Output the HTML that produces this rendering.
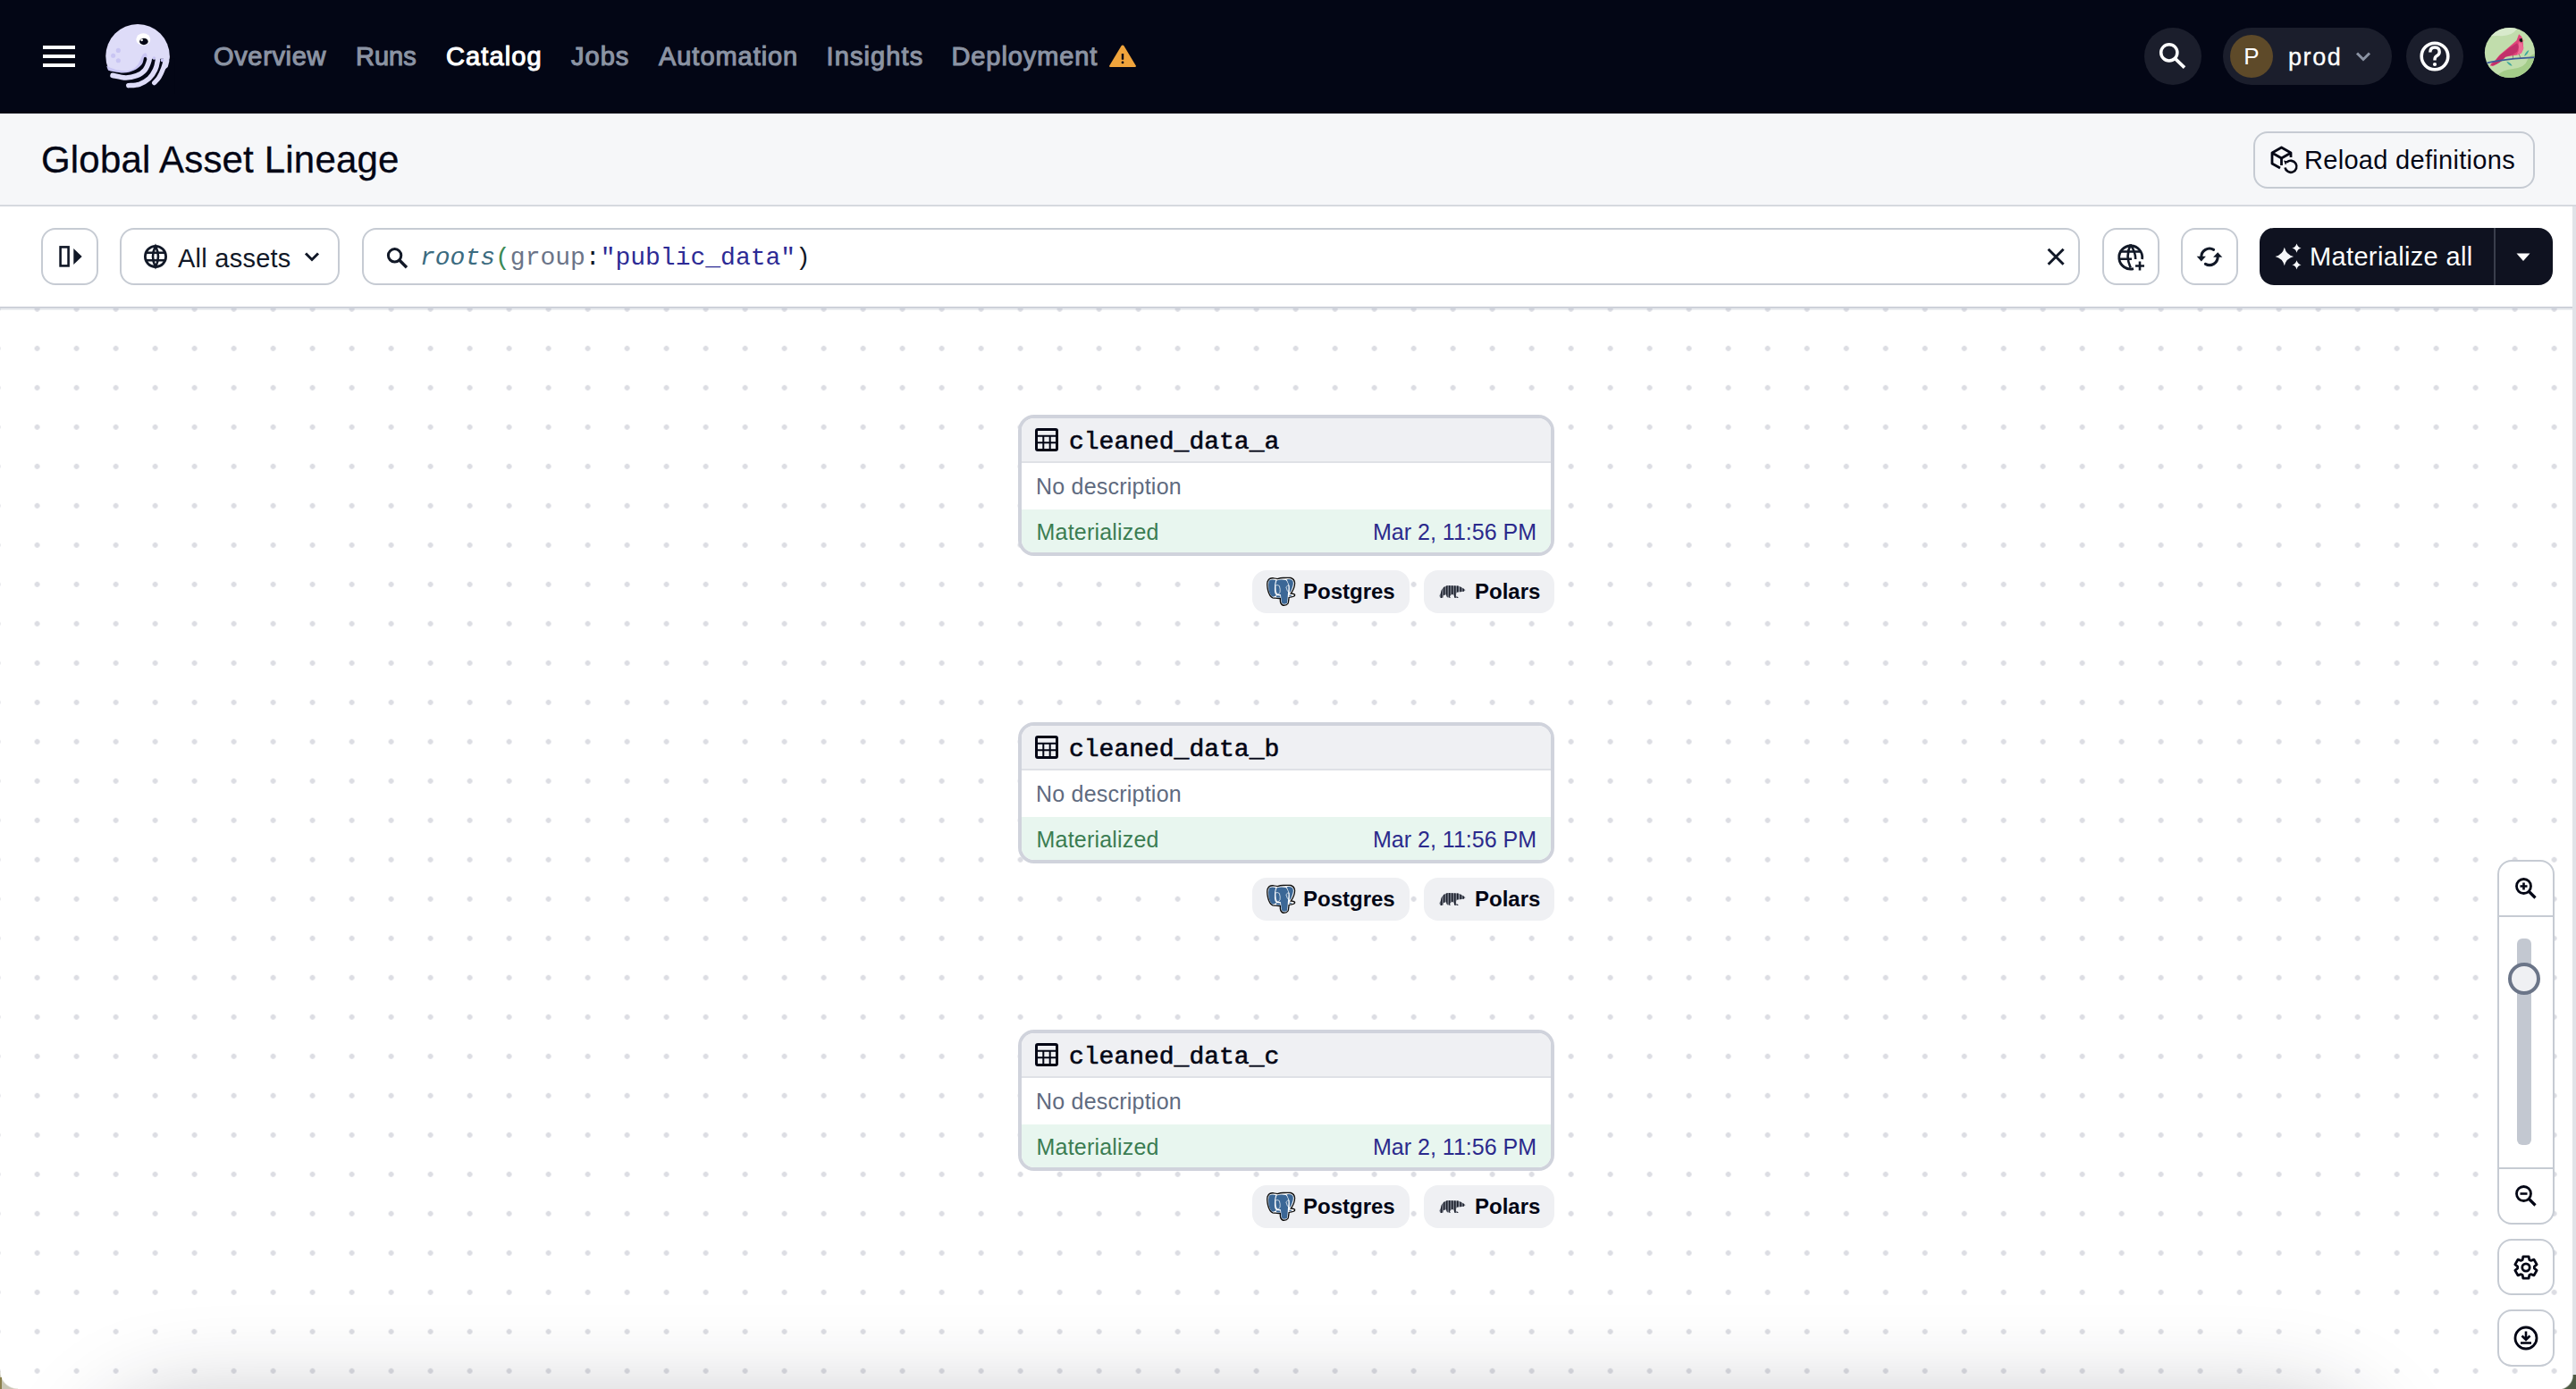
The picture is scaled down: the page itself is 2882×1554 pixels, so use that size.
<!DOCTYPE html>
<html><head><meta charset="utf-8">
<style>
*{box-sizing:border-box;margin:0;padding:0}
html,body{width:2882px;height:1554px;overflow:hidden;background:#fff;font-family:"Liberation Sans",sans-serif}
.a{position:absolute}
#nav{left:0;top:0;width:2882px;height:127px;background:#030615}
.nl{position:absolute;top:40.5px;font-size:29px;line-height:44px;letter-spacing:0.65px;color:#8b93a3;-webkit-text-stroke:1.1px #8b93a3;white-space:nowrap}
.nl.on{color:#fff;-webkit-text-stroke:1.1px #fff}
#hdr{left:0;top:127px;width:2882px;height:104px;background:#f6f7f9;border-bottom:2px solid #d6d9df}
#tb{left:0;top:231px;width:2882px;height:114px;background:#fff;border-bottom:2px solid #cdd1d9}
.btn{position:absolute;border:2px solid #c6cbd3;border-radius:16px;background:#fff}
#canvas{left:0;top:345px;width:2882px;height:1209px;background-color:#fff;
 background-image:radial-gradient(circle at center,#dcdde3 0,#dcdde3 2.6px,rgba(220,221,227,0) 3.2px);
 background-size:44px 44px;background-position:19.6px 22.8px}
.node{position:absolute;left:1139px;width:600px;height:158px;border:4px solid #d0d3dc;border-radius:18px;background:#fff;overflow:hidden}
.nh{position:absolute;left:0;top:0;width:100%;height:50px;background:#eff0f3;border-bottom:2px solid #dfe1e6}
.nname{position:absolute;left:53px;top:11px;font-family:"Liberation Mono",monospace;font-size:28px;line-height:32px;color:#030615;-webkit-text-stroke:0.6px #030615}
.ndesc{position:absolute;left:16px;top:61px;font-size:25px;letter-spacing:0.22px;line-height:30px;color:#5f6b80}
.nst{position:absolute;left:0;top:102px;width:100%;height:52px;background:#e8f6ef}
.nmat{position:absolute;left:16.5px;top:10px;font-size:25px;letter-spacing:0.2px;line-height:30px;color:#3b7d52}
.ndate{position:absolute;right:16px;top:10px;font-size:25px;line-height:30px;color:#2b2a8c}
.tag{position:absolute;height:48px;border-radius:16px;background:#eff0f3}
.tagt{position:absolute;top:11px;font-size:24px;line-height:30px;font-weight:bold;color:#030615}
</style></head><body>
<div id="nav" class="a">
 <div class="a" style="left:48px;top:51px;width:36px;height:4px;background:#fff"></div>
 <div class="a" style="left:48px;top:61px;width:36px;height:4px;background:#fff"></div>
 <div class="a" style="left:48px;top:71px;width:36px;height:4px;background:#fff"></div>
 <svg class="a" style="left:110px;top:20px" width="90" height="85" viewBox="0 0 1471 1389">
  <circle cx="720" cy="700" r="585" fill="#dedcf8"/>
  <path d="M150 880 Q330 975 520 972 Q700 955 770 770 Q800 650 860 640 Q905 650 890 745 L886 760 Q840 960 620 1000 Q400 1030 180 960Z" fill="#c9c5f3"/>
  <path d="M150 955 C200 963 367 1004 450 1005 C533 1006 593 988 650 962 C707 936 762 889 792 852 C822 815 824 760 830 742 A28 28 0 0 1 886 748 L1400 748 L1400 1389 L0 1389 L0 955Z" fill="#030615"/>
  <path d="M262 1052 C302 1059 427 1094 500 1095 C573 1096 642 1081 700 1058 C758 1035 812 1001 850 955 C888 909 915 832 930 780 C945 728 938 663 940 640" stroke="#dedcf8" stroke-width="92" fill="none" stroke-linecap="round"/>
  <path d="M552 1236 C585 1232 687 1235 750 1214 C813 1193 882 1152 930 1108 C978 1064 1014 1003 1040 948 C1066 893 1077 831 1085 780 C1093 729 1089 663 1090 640" stroke="#dedcf8" stroke-width="90" fill="none" stroke-linecap="round"/>
  <path d="M1024 1188 C1038 1171 1082 1133 1110 1088 C1138 1043 1170 973 1190 918 C1210 863 1224 806 1232 760 C1240 714 1239 660 1240 640" stroke="#dedcf8" stroke-width="86" fill="none" stroke-linecap="round"/>
  <path d="M1200 700 L1302 700 L1296 800 L1270 900 L1225 935 L1180 920Z" fill="#dedcf8"/>
  <ellipse cx="822" cy="392" rx="130" ry="112" fill="#fff"/>
  <ellipse cx="832" cy="432" rx="78" ry="62" fill="#030615"/>
  <circle cx="795" cy="405" r="22" fill="#fff"/>
  <circle cx="365" cy="595" r="42" fill="#c9c5f3"/>
  <circle cx="272" cy="690" r="42" fill="#c9c5f3"/>
  <circle cx="365" cy="780" r="42" fill="#c9c5f3"/>
  <circle cx="1020" cy="735" r="30" fill="#c9c5f3"/>
  <circle cx="1170" cy="775" r="30" fill="#c9c5f3"/>
 </svg>
 <div class="nl" style="left:239px">Overview</div>
 <div class="nl" style="left:398px;letter-spacing:0px">Runs</div>
 <div class="nl on" style="left:499px;letter-spacing:1.1px">Catalog</div>
 <div class="nl" style="left:639px;letter-spacing:1px">Jobs</div>
 <div class="nl" style="left:737px;letter-spacing:0.95px">Automation</div>
 <div class="nl" style="left:924.5px;letter-spacing:1.1px">Insights</div>
 <div class="nl" style="left:1064.5px;letter-spacing:0.9px">Deployment</div>
 <svg class="a" style="left:1240px;top:49px" width="32" height="27" viewBox="0 0 32 27">
  <path d="M16 1.5 Q17 1.5 17.6 2.5 L30.8 24.6 Q31.4 26 30 26 L2 26 Q0.6 26 1.2 24.6 L14.4 2.5 Q15 1.5 16 1.5Z" fill="#f0a43c"/>
  <rect x="14.8" y="11" width="2.4" height="6.8" rx="0.6" fill="#030615"/>
  <circle cx="16" cy="20.9" r="1.4" fill="#030615"/>
 </svg>
 <div class="a" style="left:2399px;top:31px;width:64px;height:64px;border-radius:32px;background:#1b1e2c"></div>
 <svg class="a" style="left:2399px;top:31px" width="64" height="64" viewBox="0 0 64 64">
  <circle cx="27.8" cy="27.8" r="9.1" stroke="#fff" stroke-width="3.5" fill="none"/>
  <path d="M34.6 34.6 L45 44.6" stroke="#fff" stroke-width="3.6" stroke-linecap="butt"/>
 </svg>
 <div class="a" style="left:2487px;top:31px;width:189px;height:64px;border-radius:32px;background:#1b1e2c"></div>
 <div class="a" style="left:2495px;top:39px;width:48px;height:48px;border-radius:24px;background:#5e4a29;color:#fff;font-size:26px;line-height:48px;text-align:center">P</div>
 <div class="a" style="left:2560px;top:41.8px;font-size:27px;letter-spacing:1.6px;line-height:44px;color:#fff;-webkit-text-stroke:0.3px #fff">prod</div>
 <svg class="a" style="left:2634px;top:56px" width="20" height="14" viewBox="0 0 20 14">
  <path d="M3 3.5 L10 10.5 L17 3.5" stroke="#8b93a3" stroke-width="3" fill="none"/>
 </svg>
 <div class="a" style="left:2692px;top:31px;width:64px;height:64px;border-radius:32px;background:#1b1e2c"></div>
 <svg class="a" style="left:2692px;top:31px" width="64" height="64" viewBox="0 0 64 64">
  <circle cx="32" cy="32" r="14.8" stroke="#fff" stroke-width="3.6" fill="none"/>
  <path d="M26.8 27.5 Q26.8 22 32 22 Q37.2 22 37.2 27 Q37.2 30 34.2 31.5 Q32 32.7 32 35.5 L32 36.5" stroke="#fff" stroke-width="3.4" fill="none"/>
  <circle cx="32" cy="41" r="2.1" fill="#fff"/>
 </svg>
 <svg class="a" style="left:2770px;top:20px" width="80" height="80" viewBox="0 0 1389 1389">
  <defs><clipPath id="avc"><circle cx="658" cy="677" r="487"/></clipPath></defs>
  <g clip-path="url(#avc)">
   <rect x="0" y="0" width="1389" height="1389" fill="#c1ddac"/>
   <path d="M120 420 Q260 330 480 350 Q700 360 800 210 L820 100 L100 100Z" fill="#d8eacc"/>
   <path d="M1200 690 Q1050 700 1000 820 Q960 960 720 990 Q500 1010 430 1120 L430 1300 L1200 1300Z" fill="#a4cc89"/>
   <path d="M460 720 L640 570 L790 440 L835 315 L885 360 L905 405 L915 480 L925 590 L885 680 L800 722 L660 742 L570 760 L500 835 L420 890 L340 935 L275 930 L300 880 L380 820Z" fill="#e0457a"/>
   <path d="M470 725 L650 580 L800 490 L840 560 L800 660 L700 720 L580 755 L490 845 L400 900 L320 930 L290 915 L360 850Z" fill="#c2306a"/>
   <path d="M830 470 L905 500 L925 600 L880 690 L790 725 L830 640Z" fill="#ee6b96"/>
   <path d="M895 415 L958 432 L900 455Z" fill="#f3a18e"/>
   <path d="M845 410 L895 395 L912 455 L880 475 L845 445Z" fill="#1a1a1a"/>
   <path d="M200 880 Q560 790 1160 765" stroke="#3b5a98" stroke-width="30" fill="none"/>
   <path d="M720 725 L720 790 M835 700 L865 775" stroke="#5a3040" stroke-width="9"/>
   <path d="M940 745 Q955 665 1030 625 Q1010 715 940 745Z" fill="#3ea79d"/>
   <path d="M595 845 Q675 860 705 935 Q625 915 595 845Z" fill="#3ea79d"/>
  </g>
 </svg>
</div>
<div id="hdr" class="a">
 <div class="a" style="left:46px;top:28px;font-size:42px;line-height:48px;letter-spacing:0.18px;color:#030615;-webkit-text-stroke:0.3px #030615;white-space:nowrap">Global Asset Lineage</div>
 <div class="btn" style="left:2521px;top:20px;width:315px;height:64px;background:#f6f7f9"></div>
 <svg class="a" style="left:2538px;top:34px" width="34" height="36" viewBox="0 0 34 36">
  <path d="M13 27 L4 22 L4 10 L14.5 4 L25 10 L25 15 M4 10 L14.5 16 L25 10 M14.5 16 L14.5 24" stroke="#030615" stroke-width="2.8" fill="none" stroke-linejoin="round"/>
  <path d="M20.5 20.5 A6.5 6.5 0 1 1 18.5 26.5" stroke="#030615" stroke-width="2.6" fill="none"/>
  <path d="M17 18.5 L21.5 19.5 L19 23.5Z" fill="#030615"/>
 </svg>
 <div class="a" style="left:2578px;top:30px;font-size:29px;line-height:44px;letter-spacing:0.3px;color:#030615;white-space:nowrap">Reload definitions</div>
</div>
<div id="tb" class="a">
 <div class="btn" style="left:46px;top:24px;width:64px;height:64px"></div>
 <svg class="a" style="left:46px;top:24px" width="64" height="64" viewBox="0 0 64 64">
  <rect x="21.6" y="21.4" width="9" height="21" stroke="#111827" stroke-width="2.6" fill="none"/>
  <path d="M36.3 23 L45.7 32 L36.3 41 Z" fill="#111827"/>
 </svg>
 <div class="btn" style="left:134px;top:24px;width:246px;height:64px"></div>
 <svg class="a" style="left:159px;top:41px" width="30" height="30" viewBox="0 0 30 30">
  <circle cx="15" cy="15" r="11.6" stroke="#111827" stroke-width="2.8" fill="none"/>
  <path d="M15 3.4 Q9 15 15 26.6 Q21 15 15 3.4Z" stroke="#111827" stroke-width="2.6" fill="none"/>
  <path d="M4 10.8 L26 10.8 M4 19.2 L26 19.2" stroke="#111827" stroke-width="2.6"/>
 </svg>
 <div class="a" style="left:199px;top:25.5px;font-size:29px;letter-spacing:0.25px;line-height:64px;color:#111827;white-space:nowrap">All assets</div>
 <svg class="a" style="left:338px;top:48px" width="22" height="16" viewBox="0 0 22 16">
  <path d="M4 4.5 L11 11.5 L18 4.5" stroke="#111827" stroke-width="3" fill="none"/>
 </svg>
 <div class="btn" style="left:405px;top:24px;width:1922px;height:64px"></div>
 <svg class="a" style="left:430px;top:44px" width="30" height="30" viewBox="0 0 30 30">
  <circle cx="11.6" cy="10.8" r="7.2" stroke="#111827" stroke-width="3" fill="none"/>
  <path d="M16.8 16 L25 24.2" stroke="#111827" stroke-width="3.4"/>
 </svg>
 <div class="a" style="left:470px;top:26px;font-family:'Liberation Mono',monospace;font-size:28px;line-height:64px;letter-spacing:0px;white-space:nowrap"><span style="color:#3b6b80;font-style:italic">roots</span><span style="color:#3c8a56">(</span><span style="color:#6b7488">group</span><span style="color:#111827">:</span><span style="color:#2d2b95">"public_data"</span><span style="color:#111827">)</span></div>
 <svg class="a" style="left:2286px;top:42px" width="28" height="28" viewBox="0 0 28 28">
  <path d="M5.6 5.8 L22.6 22.8 M22.6 5.8 L5.6 22.8" stroke="#111827" stroke-width="3"/>
 </svg>
 <div class="btn" style="left:2352px;top:24px;width:64px;height:64px"></div>
 <svg class="a" style="left:2352px;top:24px" width="64" height="64" viewBox="0 0 64 64">
  <path d="M35 45.6 A13 13 0 1 1 44.6 35" stroke="#111827" stroke-width="2.8" fill="none"/>
  <path d="M31.7 18.6 Q25.5 31.5 31.7 44.6 M31.7 18.6 Q37.5 28 37.2 35" stroke="#111827" stroke-width="2.6" fill="none"/>
  <path d="M19.5 26.5 L44 26.5 M19.5 34.8 L33 34.8" stroke="#111827" stroke-width="2.6"/>
  <path d="M42 37.5 L42 47.5 M37 42.5 L47 42.5" stroke="#111827" stroke-width="2.6"/>
 </svg>
 <div class="btn" style="left:2440px;top:24px;width:64px;height:64px"></div>
 
 <div class="a" style="left:2528px;top:24px;width:328px;height:64px;border-radius:16px;background:#0f1220"></div>
 <div class="a" style="left:2790px;top:24px;width:2px;height:64px;background:#3a3e4c"></div>
 <svg class="a" style="left:2440px;top:19px" width="160" height="75" viewBox="0 0 160 75">
  <path d="M22.8 37.3 A9.2 9.2 0 0 1 36.6 29.3" stroke="#111827" stroke-width="3.1" fill="none" stroke-linecap="round"/>
  <path d="M17.7 36.8 L27.9 36.8 L22.8 42.4Z" fill="#111827"/>
  <path d="M27.4 45.3 A9.2 9.2 0 0 0 41.2 37.3" stroke="#111827" stroke-width="3.1" fill="none" stroke-linecap="round"/>
  <path d="M36.1 37.8 L46.3 37.8 L41.2 32.2Z" fill="#111827"/>
  <path d="M115.8 26.7 Q117.8 35.0 126.1 37 Q117.8 39.0 115.8 47.3 Q113.8 39.0 105.5 37 Q113.8 35.0 115.8 26.7Z" fill="#f6f7f9"/>
  <path d="M129.5 22.5 Q130.5 26.6 134.6 27.6 Q130.5 28.6 129.5 32.7 Q128.5 28.6 124.4 27.6 Q128.5 26.6 129.5 22.5Z" fill="#f6f7f9"/>
  <path d="M129.5 41.199999999999996 Q130.5 45.3 134.6 46.3 Q130.5 47.3 129.5 51.4 Q128.5 47.3 124.4 46.3 Q128.5 45.3 129.5 41.199999999999996Z" fill="#f6f7f9"/>
 </svg>
 <div class="a" style="left:2584px;top:24px;font-size:29px;letter-spacing:0.35px;line-height:64px;color:#fff;white-space:nowrap">Materialize all</div>
 <svg class="a" style="left:2812px;top:50px" width="22" height="14" viewBox="0 0 22 14">
  <path d="M3.5 2.5 L18.5 2.5 L11 11Z" fill="#fff"/>
 </svg>
 <div class="a" style="left:2878px;top:0;width:4px;height:1323px;background:#e1e3e8"></div>
</div>
<div id="canvas" class="a">
</div>
<div class="a" style="left:0;top:345px;width:2878px;height:2px;background:rgba(180,186,200,0.28)"></div>
<div class="node" style="top:464px">
  <div class="nh"></div>
  <svg class="a" style="left:15px;top:11px" width="26" height="26" viewBox="0 0 26 26">
   <rect x="1.5" y="1.5" width="23" height="23" rx="1.5" stroke="#030615" stroke-width="3" fill="none"/>
   <path d="M1.5 8.7 L24.5 8.7 M1.5 16.2 L24.5 16.2 M9.3 8.7 L9.3 24.5 M16.7 8.7 L16.7 24.5" stroke="#030615" stroke-width="2"/>
  </svg>
  <div class="nname">cleaned_data_a</div>
  <div class="ndesc">No description</div>
  <div class="nst"><div class="nmat">Materialized</div><div class="ndate">Mar 2, 11:56 PM</div></div>
 </div>
 <div class="tag" style="left:1401px;top:638px;width:176px"></div>
 <svg class="a" style="left:1410px;top:640px" width="45" height="45" viewBox="0 0 1389 1389">
  <path d="M430 890 Q330 860 270 650 Q220 450 250 330 Q300 200 450 210 Q560 220 600 235 Q700 195 820 200 Q950 190 1050 200 Q1180 240 1190 380 Q1190 550 1060 740 Q1160 740 1190 780 Q1200 850 1080 860 Q1000 870 990 880 Q980 1000 960 1080 Q910 1160 790 1150 Q700 1120 690 1000 L690 910 Q600 915 520 900 Q470 900 430 890Z" fill="#fff" stroke="#0d0d0d" stroke-width="42"/>
  <path d="M300 300 Q400 230 535 288 Q485 400 492 650 Q505 780 560 800 Q480 850 430 860 Q330 800 290 600 Q262 420 300 300Z" fill="#3b6796"/>
  <path d="M565 295 Q700 240 880 280 Q990 380 970 600 Q950 760 950 820 Q945 1000 925 1075 Q880 1115 800 1105 Q735 1080 728 1000 Q718 860 708 790 Q690 760 600 770 Q540 760 525 600 Q515 420 565 295Z" fill="#3b6796"/>
  <path d="M910 255 Q1080 225 1130 320 Q1158 450 1050 680 Q1010 715 1000 700 Q1010 550 975 400 Q945 320 910 255Z" fill="#3b6796"/>
  <path d="M1000 795 Q1080 790 1110 808 Q1090 830 1000 838Z" fill="#3b6796"/>
  <path d="M560 810 Q620 800 690 820 L690 880 Q600 880 550 870Z" fill="#3b6796"/>
  <path d="M520 460 Q600 430 660 480 Q700 600 680 700 Q640 770 580 770 Q520 700 520 460Z" fill="none" stroke="#fff" stroke-width="22"/>
  <path d="M890 520 Q950 440 1000 460 Q1010 600 990 700 Q930 680 890 520Z" fill="none" stroke="#fff" stroke-width="22"/>
 </svg>
 <div class="tagt" style="left:1458px;top:647px">Postgres</div>
 <div class="tag" style="left:1593px;top:638px;width:146px"></div>
 <svg class="a" style="left:1600px;top:645px" width="50" height="35" viewBox="0 0 1984 1389">
  <defs><clipPath id="bear1"><path d="M600 480 Q700 420 780 400 L1250 420 Q1400 470 1480 540 L1580 610 L1480 660 Q1300 690 1200 690 Q1140 720 1150 860 L1270 940 L1100 950 Q1060 900 1050 820 Q1000 790 980 780 Q880 850 870 880 L920 940 L760 920 Q720 860 720 800 Q650 810 600 830 Q580 890 580 930 L470 960 Q420 900 400 850 Q470 760 480 700 Q500 620 520 580 Q560 520 600 480Z"/></clipPath></defs>
  <g clip-path="url(#bear1)">
   <rect x="380" y="380" width="1220" height="600" fill="#8d929d"/>
   <path d="M500 380 L500 980 M620 380 L620 980 M740 380 L740 980 M860 380 L860 980 M980 380 L980 980 M1100 380 L1100 980 M1220 380 L1220 980 M1360 380 L1360 980 M1480 380 L1480 980" stroke="#1b1f2b" stroke-width="70"/>
  </g>
 </svg>
 <div class="tagt" style="left:1650px;top:647px">Polars</div>
<div class="node" style="top:808px">
  <div class="nh"></div>
  <svg class="a" style="left:15px;top:11px" width="26" height="26" viewBox="0 0 26 26">
   <rect x="1.5" y="1.5" width="23" height="23" rx="1.5" stroke="#030615" stroke-width="3" fill="none"/>
   <path d="M1.5 8.7 L24.5 8.7 M1.5 16.2 L24.5 16.2 M9.3 8.7 L9.3 24.5 M16.7 8.7 L16.7 24.5" stroke="#030615" stroke-width="2"/>
  </svg>
  <div class="nname">cleaned_data_b</div>
  <div class="ndesc">No description</div>
  <div class="nst"><div class="nmat">Materialized</div><div class="ndate">Mar 2, 11:56 PM</div></div>
 </div>
 <div class="tag" style="left:1401px;top:982px;width:176px"></div>
 <svg class="a" style="left:1410px;top:984px" width="45" height="45" viewBox="0 0 1389 1389">
  <path d="M430 890 Q330 860 270 650 Q220 450 250 330 Q300 200 450 210 Q560 220 600 235 Q700 195 820 200 Q950 190 1050 200 Q1180 240 1190 380 Q1190 550 1060 740 Q1160 740 1190 780 Q1200 850 1080 860 Q1000 870 990 880 Q980 1000 960 1080 Q910 1160 790 1150 Q700 1120 690 1000 L690 910 Q600 915 520 900 Q470 900 430 890Z" fill="#fff" stroke="#0d0d0d" stroke-width="42"/>
  <path d="M300 300 Q400 230 535 288 Q485 400 492 650 Q505 780 560 800 Q480 850 430 860 Q330 800 290 600 Q262 420 300 300Z" fill="#3b6796"/>
  <path d="M565 295 Q700 240 880 280 Q990 380 970 600 Q950 760 950 820 Q945 1000 925 1075 Q880 1115 800 1105 Q735 1080 728 1000 Q718 860 708 790 Q690 760 600 770 Q540 760 525 600 Q515 420 565 295Z" fill="#3b6796"/>
  <path d="M910 255 Q1080 225 1130 320 Q1158 450 1050 680 Q1010 715 1000 700 Q1010 550 975 400 Q945 320 910 255Z" fill="#3b6796"/>
  <path d="M1000 795 Q1080 790 1110 808 Q1090 830 1000 838Z" fill="#3b6796"/>
  <path d="M560 810 Q620 800 690 820 L690 880 Q600 880 550 870Z" fill="#3b6796"/>
  <path d="M520 460 Q600 430 660 480 Q700 600 680 700 Q640 770 580 770 Q520 700 520 460Z" fill="none" stroke="#fff" stroke-width="22"/>
  <path d="M890 520 Q950 440 1000 460 Q1010 600 990 700 Q930 680 890 520Z" fill="none" stroke="#fff" stroke-width="22"/>
 </svg>
 <div class="tagt" style="left:1458px;top:991px">Postgres</div>
 <div class="tag" style="left:1593px;top:982px;width:146px"></div>
 <svg class="a" style="left:1600px;top:989px" width="50" height="35" viewBox="0 0 1984 1389">
  <defs><clipPath id="bear2"><path d="M600 480 Q700 420 780 400 L1250 420 Q1400 470 1480 540 L1580 610 L1480 660 Q1300 690 1200 690 Q1140 720 1150 860 L1270 940 L1100 950 Q1060 900 1050 820 Q1000 790 980 780 Q880 850 870 880 L920 940 L760 920 Q720 860 720 800 Q650 810 600 830 Q580 890 580 930 L470 960 Q420 900 400 850 Q470 760 480 700 Q500 620 520 580 Q560 520 600 480Z"/></clipPath></defs>
  <g clip-path="url(#bear2)">
   <rect x="380" y="380" width="1220" height="600" fill="#8d929d"/>
   <path d="M500 380 L500 980 M620 380 L620 980 M740 380 L740 980 M860 380 L860 980 M980 380 L980 980 M1100 380 L1100 980 M1220 380 L1220 980 M1360 380 L1360 980 M1480 380 L1480 980" stroke="#1b1f2b" stroke-width="70"/>
  </g>
 </svg>
 <div class="tagt" style="left:1650px;top:991px">Polars</div>
<div class="node" style="top:1152px">
  <div class="nh"></div>
  <svg class="a" style="left:15px;top:11px" width="26" height="26" viewBox="0 0 26 26">
   <rect x="1.5" y="1.5" width="23" height="23" rx="1.5" stroke="#030615" stroke-width="3" fill="none"/>
   <path d="M1.5 8.7 L24.5 8.7 M1.5 16.2 L24.5 16.2 M9.3 8.7 L9.3 24.5 M16.7 8.7 L16.7 24.5" stroke="#030615" stroke-width="2"/>
  </svg>
  <div class="nname">cleaned_data_c</div>
  <div class="ndesc">No description</div>
  <div class="nst"><div class="nmat">Materialized</div><div class="ndate">Mar 2, 11:56 PM</div></div>
 </div>
 <div class="tag" style="left:1401px;top:1326px;width:176px"></div>
 <svg class="a" style="left:1410px;top:1328px" width="45" height="45" viewBox="0 0 1389 1389">
  <path d="M430 890 Q330 860 270 650 Q220 450 250 330 Q300 200 450 210 Q560 220 600 235 Q700 195 820 200 Q950 190 1050 200 Q1180 240 1190 380 Q1190 550 1060 740 Q1160 740 1190 780 Q1200 850 1080 860 Q1000 870 990 880 Q980 1000 960 1080 Q910 1160 790 1150 Q700 1120 690 1000 L690 910 Q600 915 520 900 Q470 900 430 890Z" fill="#fff" stroke="#0d0d0d" stroke-width="42"/>
  <path d="M300 300 Q400 230 535 288 Q485 400 492 650 Q505 780 560 800 Q480 850 430 860 Q330 800 290 600 Q262 420 300 300Z" fill="#3b6796"/>
  <path d="M565 295 Q700 240 880 280 Q990 380 970 600 Q950 760 950 820 Q945 1000 925 1075 Q880 1115 800 1105 Q735 1080 728 1000 Q718 860 708 790 Q690 760 600 770 Q540 760 525 600 Q515 420 565 295Z" fill="#3b6796"/>
  <path d="M910 255 Q1080 225 1130 320 Q1158 450 1050 680 Q1010 715 1000 700 Q1010 550 975 400 Q945 320 910 255Z" fill="#3b6796"/>
  <path d="M1000 795 Q1080 790 1110 808 Q1090 830 1000 838Z" fill="#3b6796"/>
  <path d="M560 810 Q620 800 690 820 L690 880 Q600 880 550 870Z" fill="#3b6796"/>
  <path d="M520 460 Q600 430 660 480 Q700 600 680 700 Q640 770 580 770 Q520 700 520 460Z" fill="none" stroke="#fff" stroke-width="22"/>
  <path d="M890 520 Q950 440 1000 460 Q1010 600 990 700 Q930 680 890 520Z" fill="none" stroke="#fff" stroke-width="22"/>
 </svg>
 <div class="tagt" style="left:1458px;top:1335px">Postgres</div>
 <div class="tag" style="left:1593px;top:1326px;width:146px"></div>
 <svg class="a" style="left:1600px;top:1333px" width="50" height="35" viewBox="0 0 1984 1389">
  <defs><clipPath id="bear3"><path d="M600 480 Q700 420 780 400 L1250 420 Q1400 470 1480 540 L1580 610 L1480 660 Q1300 690 1200 690 Q1140 720 1150 860 L1270 940 L1100 950 Q1060 900 1050 820 Q1000 790 980 780 Q880 850 870 880 L920 940 L760 920 Q720 860 720 800 Q650 810 600 830 Q580 890 580 930 L470 960 Q420 900 400 850 Q470 760 480 700 Q500 620 520 580 Q560 520 600 480Z"/></clipPath></defs>
  <g clip-path="url(#bear3)">
   <rect x="380" y="380" width="1220" height="600" fill="#8d929d"/>
   <path d="M500 380 L500 980 M620 380 L620 980 M740 380 L740 980 M860 380 L860 980 M980 380 L980 980 M1100 380 L1100 980 M1220 380 L1220 980 M1360 380 L1360 980 M1480 380 L1480 980" stroke="#1b1f2b" stroke-width="70"/>
  </g>
 </svg>
 <div class="tagt" style="left:1650px;top:1335px">Polars</div>
 <div class="btn" style="left:2794px;top:962px;width:64px;height:408px;background:#fff"></div>
 <div class="a" style="left:2796px;top:1024px;width:60px;height:2px;background:#c6cbd3"></div>
 <div class="a" style="left:2796px;top:1306px;width:60px;height:2px;background:#c6cbd3"></div>
 <svg class="a" style="left:2808px;top:976px" width="36" height="36" viewBox="0 0 36 36">
  <circle cx="15.5" cy="15.5" r="8" stroke="#030615" stroke-width="2.8" fill="none"/>
  <path d="M21.5 21.5 L28.5 28.5" stroke="#030615" stroke-width="3.2"/>
  <path d="M15.5 11.5 L15.5 19.5 M11.5 15.5 L19.5 15.5" stroke="#030615" stroke-width="2.6"/>
 </svg>
 <div class="a" style="left:2816px;top:1050px;width:16px;height:231px;border-radius:6px;background:#c3c8d1"></div>
 <div class="a" style="left:2805.5px;top:1076.5px;width:36px;height:36px;border-radius:50%;background:#eff0f3;border:4px solid #6b7588"></div>
 <svg class="a" style="left:2808px;top:1320px" width="36" height="36" viewBox="0 0 36 36">
  <circle cx="15.5" cy="15.5" r="8" stroke="#030615" stroke-width="2.8" fill="none"/>
  <path d="M21.5 21.5 L28.5 28.5" stroke="#030615" stroke-width="3.2"/>
  <path d="M11.5 15.5 L19.5 15.5" stroke="#030615" stroke-width="2.6"/>
 </svg>
 <div class="btn" style="left:2794px;top:1386px;width:64px;height:63px;background:#fff"></div>
 <svg class="a" style="left:2808px;top:1400px" width="36" height="36" viewBox="0 0 36 36">
  <path d="M14.17 9.42 L14.88 5.79 L21.12 5.79 L21.83 9.42 L23.52 10.39 L27.01 9.20 L30.13 14.60 L27.35 17.03 L27.35 18.97 L30.13 21.40 L27.01 26.80 L23.52 25.61 L21.83 26.58 L21.12 30.21 L14.88 30.21 L14.17 26.58 L12.48 25.61 L8.99 26.80 L5.87 21.40 L8.65 18.97 L8.65 17.03 L5.87 14.60 L8.99 9.20 L12.48 10.39Z" stroke="#030615" stroke-width="2.8" fill="none" stroke-linejoin="round"/>
  <circle cx="18" cy="18" r="4.2" stroke="#030615" stroke-width="2.8" fill="none"/>
 </svg>
 <div class="btn" style="left:2794px;top:1465px;width:64px;height:64px;background:#fff"></div>
 <svg class="a" style="left:2808px;top:1479px" width="36" height="36" viewBox="0 0 36 36">
  <circle cx="18" cy="18" r="12" stroke="#030615" stroke-width="2.8" fill="none"/>
  <path d="M18 10.5 L18 19.5 M13.5 15.5 L18 20 L22.5 15.5" stroke="#030615" stroke-width="2.6" fill="none"/>
  <path d="M12 23.5 L24 23.5" stroke="#030615" stroke-width="2.6"/>
 </svg>
 <div class="a" style="left:2878px;top:345px;width:4px;height:1209px;background:#e1e3e8"></div>
 <div class="a" style="left:0;top:345px;width:2882px;height:1209px;overflow:hidden;pointer-events:none">
  <div class="a" style="left:110px;top:1232px;width:2540px;height:200px;border-radius:100px;box-shadow:0 0 100px 12px rgba(30,30,45,0.26)"></div>
 </div>
 <div class="a" style="left:0;top:1534px;width:20px;height:20px;background:radial-gradient(circle at 20px 0,rgba(0,0,0,0) 19px,#c9c7b6 20.5px)"></div>
 <div class="a" style="left:0;top:1541px;width:2px;height:13px;background:#8a7f4c"></div>
 <div class="a" style="left:2862px;top:1538px;width:20px;height:16px;background:radial-gradient(circle at 0 0,rgba(0,0,0,0) 16px,#4e5b44 17.5px)"></div>

</body></html>
